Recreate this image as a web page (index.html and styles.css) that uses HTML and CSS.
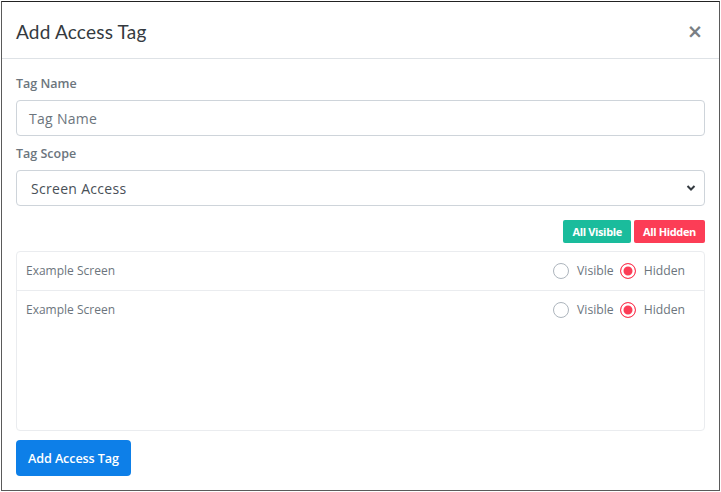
FILE: index.html
```html
<!DOCTYPE html>
<html>
<head>
<meta charset="utf-8">
<link rel="stylesheet" href="styles.css">
</head>
<body>
<div class="modal">
  <div class="modal-header">
    <h5 class="modal-title">Add Access Tag</h5>
    <span class="close">&times;</span>
  </div>
  <div class="modal-body">
    <label class="form-label">Tag Name</label>
    <div class="form-control placeholder">Tag Name</div>
    <label class="form-label second">Tag Scope</label>
    <div class="form-control select">
      <span>Screen Access</span>
      <svg class="chevron" width="10" height="8" viewBox="0 0 10 8"><path d="M1.5 2 L5 5.5 L8.5 2" fill="none" stroke="#343a40" stroke-width="2"/></svg>
    </div>
    <div class="bulk">
      <span class="btn-sm green">All Visible</span>
      <span class="btn-sm red">All Hidden</span>
    </div>
    <div class="list">
      <div class="row">
        <span class="row-name">Example Screen</span>
        <div class="radios">
          <span class="radio"></span><span class="radio-label">Visible</span>
          <span class="radio checked"></span><span class="radio-label">Hidden</span>
        </div>
      </div>
      <div class="row">
        <span class="row-name">Example Screen</span>
        <div class="radios">
          <span class="radio"></span><span class="radio-label">Visible</span>
          <span class="radio checked"></span><span class="radio-label">Hidden</span>
        </div>
      </div>
    </div>
    <button class="btn-primary">Add Access Tag</button>
  </div>
</div>
</body>
</html>
```
FILE: styles.css
```css
* { box-sizing: border-box; }
html, body { margin: 0; padding: 0; background: #fff; }
body { font-family: "Nunito", "Lato", "Open Sans", sans-serif; color: #6c757d; }
.modal {
  margin: 1px 0 0 1px;
  width: 719px;
  height: 490px;
  border: 1px solid #5a5a5a;
  border-top-color: #222;
  background: #fff;
  display: flex;
  flex-direction: column;
}
.modal-header {
  height: 57px;
  border-bottom: 1px solid #dee2e6;
  display: flex;
  align-items: center;
  justify-content: space-between;
  padding: 0 14px 0 14px;
}
.modal-title {
  margin: 0;
  font-family: "Lato", sans-serif;
  font-size: 19px;
  font-weight: 400;
  color: #343a40;
  letter-spacing: 0.2px;
  padding-top: 2px;
}
.close {
  font-family: "DejaVu Sans", sans-serif;
  font-size: 19px;
  font-weight: 700;
  color: #7a7f84;
  line-height: 1;
  margin-right: 2px;
  padding-top: 2px;
}
.modal-body {
  padding: 15px 14px 0 14px;
  display: flex;
  flex-direction: column;
}
.form-label {
  font-family: "Open Sans", sans-serif;
  font-size: 12.5px;
  font-weight: 600;
  color: #6c757d;
  height: 19px;
  line-height: 19px;
  margin-bottom: 7px;
}
.form-label.second { margin-top: 8px; }
.form-control {
  height: 36px;
  border: 1px solid #ced4da;
  border-radius: 4px;
  padding: 0 12px;
  display: flex;
  align-items: center;
  font-family: "Open Sans", sans-serif;
  font-size: 14px;
  letter-spacing: 0.3px;
}
.placeholder { color: #6c757d; }
.select { color: #495057; padding-left: 14px; justify-content: space-between; padding-right: 8px; }
.chevron { display: block; }
.bulk {
  margin-top: 14px;
  display: flex;
  justify-content: flex-end;
  gap: 3px;
}
.btn-sm {
  height: 23px;
  line-height: 23px;
  padding: 0 9px;
  border-radius: 2px;
  font-family: "Open Sans", sans-serif;
  font-size: 11px;
  font-weight: 700;
  color: #fff;
  letter-spacing: -0.35px;
}
.green { background: #1abc9c; }
.red { background: #fc3d56; }
.list {
  margin-top: 8px;
  height: 180px;
  border: 1px solid #eaecef;
  border-radius: 4px;
}
.row {
  height: 39px;
  border-bottom: 1px solid #eaecef;
  display: flex;
  align-items: center;
  justify-content: space-between;
  padding: 0 19px 1px 9px;
}
.row:last-child { border-bottom: none; height: 38px; }
.row-name {
  font-family: "Open Sans", sans-serif;
  font-size: 12px;
  color: #6c757d;
}
.radios { display: flex; align-items: center; }
.radio {
  width: 16px;
  height: 16px;
  border: 1px solid #adb5bd;
  border-radius: 50%;
  background: #fff;
  margin-right: 8px;
}
.radio.checked {
  border: 1.5px solid #fc3d56;
  box-shadow: inset 0 0 0 2.5px #fff;
  background: #fc3d56;
}
.radio-label {
  font-family: "Open Sans", sans-serif;
  font-size: 12.2px;
  color: #6c757d;
  margin-right: 6px;
}
.radio-label:last-child { margin-right: 0; }
.btn-primary {
  margin-top: 9px;
  align-self: flex-start;
  height: 36px;
  padding: 0 12px;
  border: none;
  border-radius: 4px;
  background: #0d7fe8;
  color: #fff;
  font-family: "Open Sans", sans-serif;
  font-size: 12.6px;
  font-weight: 600;
  letter-spacing: -0.1px;
}
```
